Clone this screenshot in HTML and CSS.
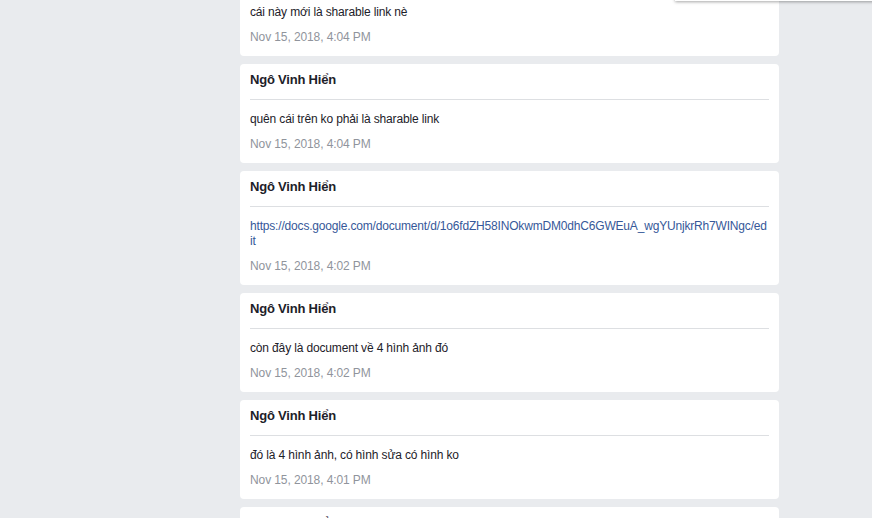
FILE: index.html
```html
<!DOCTYPE html>
<html lang="vi">
<head>
<meta charset="utf-8">
<title>Messages</title>
<link rel="stylesheet" href="styles.css">
</head>
<body>
<div class="dropdown"></div>
<main class="feed">
  <article class="card">
    <header class="card-head"><span class="author">Ngô Vinh Hiển</span></header>
    <div class="card-body">
      <p class="msg">cái này mới là sharable link nè</p>
      <time class="date">Nov 15, 2018, 4:04 PM</time>
    </div>
  </article>
  <article class="card">
    <header class="card-head"><span class="author">Ngô Vinh Hiển</span></header>
    <div class="card-body">
      <p class="msg">quên cái trên ko phải là sharable link</p>
      <time class="date">Nov 15, 2018, 4:04 PM</time>
    </div>
  </article>
  <article class="card">
    <header class="card-head"><span class="author">Ngô Vinh Hiển</span></header>
    <div class="card-body">
      <p class="msg"><a class="link" href="#">https://docs.google.com/document/d/1o6fdZH58INOkwmDM0dhC6GWEuA_wgYUnjkrRh7WINgc/edit</a></p>
      <time class="date">Nov 15, 2018, 4:02 PM</time>
    </div>
  </article>
  <article class="card">
    <header class="card-head"><span class="author">Ngô Vinh Hiển</span></header>
    <div class="card-body">
      <p class="msg">còn đây là document về 4 hình ảnh đó</p>
      <time class="date">Nov 15, 2018, 4:02 PM</time>
    </div>
  </article>
  <article class="card">
    <header class="card-head"><span class="author">Ngô Vinh Hiển</span></header>
    <div class="card-body">
      <p class="msg">đó là 4 hình ảnh, có hình sửa có hình ko</p>
      <time class="date">Nov 15, 2018, 4:01 PM</time>
    </div>
  </article>
  <article class="card">
    <header class="card-head"><span class="author">Ngô Vinh Hiển</span></header>
    <div class="card-body">
      <p class="msg">4 hình ảnh</p>
      <time class="date">Nov 15, 2018, 4:00 PM</time>
    </div>
  </article>
</main>
</body>
</html>
```
FILE: styles.css
```css
html, body {
  margin: 0;
  padding: 0;
  height: 100%;
  overflow: hidden;
}
body {
  background: #e9ebee;
  font-family: "Liberation Sans", Arial, Helvetica, sans-serif;
  color: #1d2129;
  position: relative;
}
.dropdown {
  position: absolute;
  left: 675px;
  right: -10px;
  top: -100px;
  height: 101px;
  background: #ffffff;
  box-shadow: 0 1px 3px rgba(0, 0, 0, 0.35);
  z-index: 5;
}
.feed {
  margin: -43px 0 0 240px;
  width: 539px;
  display: flex;
  flex-direction: column;
  gap: 8px;
}
.card {
  background: #ffffff;
  border-radius: 4px;
  padding: 0 10px 11px;
}
.card-head {
  padding: 7px 0 10px;
  border-bottom: 1px solid #dddfe2;
}
.author {
  display: block;
  font-size: 13px;
  line-height: 18px;
  font-weight: bold;
  letter-spacing: -0.2px;
  color: #1d2129;
}
.card-body {
  padding-top: 12px;
  display: flex;
  flex-direction: column;
  gap: 9px;
}
.msg {
  margin: 0;
  font-size: 12px;
  line-height: 15px;
  letter-spacing: -0.15px;
  color: #1d2129;
  word-break: break-all;
}
.link {
  color: #365899;
  text-decoration: none;
  letter-spacing: -0.18px;
}
.date {
  display: block;
  font-size: 12px;
  line-height: 16px;
  letter-spacing: -0.1px;
  color: #90949c;
}
```
